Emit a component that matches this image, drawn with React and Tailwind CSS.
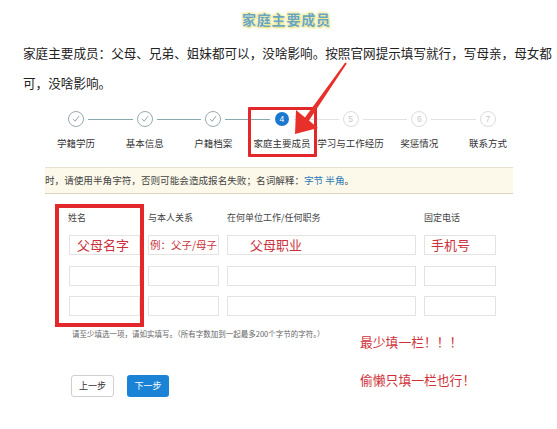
import React from "react";

const steps = [
  { label: "学籍学历", state: "done" },
  { label: "基本信息", state: "done" },
  { label: "户籍档案", state: "done" },
  { label: "家庭主要成员", state: "active", n: 4 },
  { label: "学习与工作经历", state: "todo", n: 5 },
  { label: "奖惩情况", state: "todo", n: 6 },
  { label: "联系方式", state: "todo", n: 7 },
];

function Check() {
  return (
    <svg width="8" height="8" viewBox="0 0 8 8" fill="none">
      <path d="M1.3 4.2 L3.2 6.2 L6.8 1.4" stroke="#8a9ca0" strokeWidth="0.9" strokeLinecap="round" strokeLinejoin="round" />
    </svg>
  );
}

function Step({ s, i }) {
  const leftTeal = i > 0 && i <= 3;
  const leftGray = i > 3;
  const rightTeal = i < 3;
  const rightGray = i >= 3 && i < 6;
  return (
    <div className="flex flex-col items-center">
      <div className="flex items-center w-full h-[16px]">
        <div className={leftTeal ? "flex-1 h-px bg-[#86a9ae]" : leftGray ? "flex-1 h-px bg-[#e2e2e2]" : "flex-1 h-px"} />
        {s.state === "done" && (
          <div className="mx-[4px] w-[16px] h-[16px] rounded-full border border-[#9aaaad] flex items-center justify-center bg-white">
            <Check />
          </div>
        )}
        {s.state === "active" && (
          <div className="mx-[5px] w-[14px] h-[14px] rounded-full bg-[#1a78cf] flex items-center justify-center text-white text-[8.5px] leading-none font-['Liberation_Sans',sans-serif]">
            {s.n}
          </div>
        )}
        {s.state === "todo" && (
          <div className="mx-[4px] w-[16px] h-[16px] rounded-full border border-[#dcdcdc] flex items-center justify-center text-[#c8c8c8] text-[8.5px] leading-none font-['Liberation_Sans',sans-serif]">
            {s.n}
          </div>
        )}
        <div className={rightTeal ? "flex-1 h-px bg-[#86a9ae]" : rightGray ? "flex-1 h-px bg-[#e2e2e2]" : "flex-1 h-px"} />
      </div>
      <div className="mt-[9px] text-[9.5px] leading-[14px] whitespace-nowrap text-[#333]">{s.label}</div>
    </div>
  );
}

function Box({ children, className = "" }) {
  return (
    <div className={"h-[20px] border border-[#e3e3e3] bg-white flex items-center whitespace-nowrap overflow-hidden text-[#c9323b] " + className}>
      {children}
    </div>
  );
}

export default function App() {
  return (
    <div className="w-[557px] h-[429px] relative overflow-hidden bg-white font-['Noto_Sans_CJK_SC','Noto_Sans',sans-serif] text-[#222]">
      {/* title */}
      <div className="pt-[9px] pl-[242px] h-[29px]">
        <div className="text-[14px] leading-[20px] font-bold tracking-[0.8px] text-[#6aa6b8] [text-shadow:0_0_1px_#fff,0_0_1px_#fff,1px_1px_2px_#e6d84a,-1px_-1px_2px_#f3ea8a,0_0_3px_#efe37a]">
          家庭主要成员
        </div>
      </div>

      {/* paragraph */}
      <div className="mt-[9px] pl-[23px] text-[12.6px] leading-[30px] text-[#222]">
        <div className="whitespace-nowrap">家庭主要成员：父母、兄弟、姐妹都可以，没啥影响。按照官网提示填写就行，写母亲，母女都</div>
        <div className="whitespace-nowrap">可，没啥影响。</div>
      </div>

      {/* steps */}
      <div className="mt-[13px] ml-[41.67px] grid grid-cols-[repeat(7,68.67px)]">
        {steps.map((s, i) => (
          <Step key={i} s={s} i={i} />
        ))}
      </div>

      {/* notice */}
      <div className="mt-[17px] ml-[45px] w-[468px] h-[27px] bg-[#fcf9ea] border-t border-[#e6e2cf] border-b border-b-[#d9d5c2] flex items-center text-[9.6px] text-[#444] whitespace-nowrap overflow-hidden">
        时，请使用半角字符，否则可能会造成报名失败；名词解释：<span className="text-[#2b78b5]">字节 半角</span>。
      </div>

      {/* table */}
      <div className="mt-[18px] ml-[69px] grid grid-cols-[71px_71px_189px_72px] gap-x-[8px] text-[9px] leading-[12px] text-[#444]">
        <div className="-ml-px">姓名</div>
        <div>与本人关系</div>
        <div>在何单位工作/任何职务</div>
        <div>固定电话</div>
      </div>
      <div className="mt-[11px] ml-[69px] grid grid-cols-[71px_71px_189px_72px] gap-x-[8px] gap-y-[10.5px]">
        <Box className="pl-[7px] text-[13px]">父母名字</Box>
        <Box className="pl-px text-[10.5px]">例：父子/母子</Box>
        <Box className="pl-[22px] text-[13px]">父母职业</Box>
        <Box className="pl-[6px] text-[13px]">手机号</Box>
        <Box />
        <Box />
        <Box />
        <Box />
        <Box />
        <Box />
        <Box />
        <Box />
      </div>

      {/* bottom */}
      <div className="mt-[13px] flex">
        <div className="ml-[71px] w-[289px]">
          <div className="pl-px text-[7.5px] leading-[10px] text-[#666] whitespace-nowrap">
            请至少填选一项，请如实填写。（所有字数加到一起最多200个字节的字符。）
          </div>
          <div className="mt-[36px] flex gap-[13px]">
            <button className="w-[43px] h-[22px] rounded-[3px] border border-[#cfcfcf] bg-white text-[9px] text-[#333] flex items-center justify-center">
              上一步
            </button>
            <button className="w-[42px] h-[22px] rounded-[3px] bg-[#1b83d6] text-[9px] text-white flex items-center justify-center">
              下一步
            </button>
          </div>
        </div>
        <div className="pt-[4px] text-[12.8px] leading-[18px] text-[#cf3139] whitespace-nowrap">
          <div>最少填一栏！！！</div>
          <div className="mt-[20px]">偷懒只填一栏也行！</div>
        </div>
      </div>

      {/* annotations */}
      <div className="absolute left-[248px] top-[107px] w-[69px] h-[50px] border-[3.5px] border-[#e2282b] rounded-[1px]" />
      <div className="absolute left-[55px] top-[204px] w-[89px] h-[123px] border-4 border-[#e2282b]" />
      <svg className="absolute left-0 top-0" width="557" height="429" viewBox="0 0 557 429">
        <polygon
          points="345.2,62.4 346.8,63.6 309,120.5 318,128 295,134 296,110 305,117.5"
          fill="#e8302a"
        />
      </svg>
    </div>
  );
}
